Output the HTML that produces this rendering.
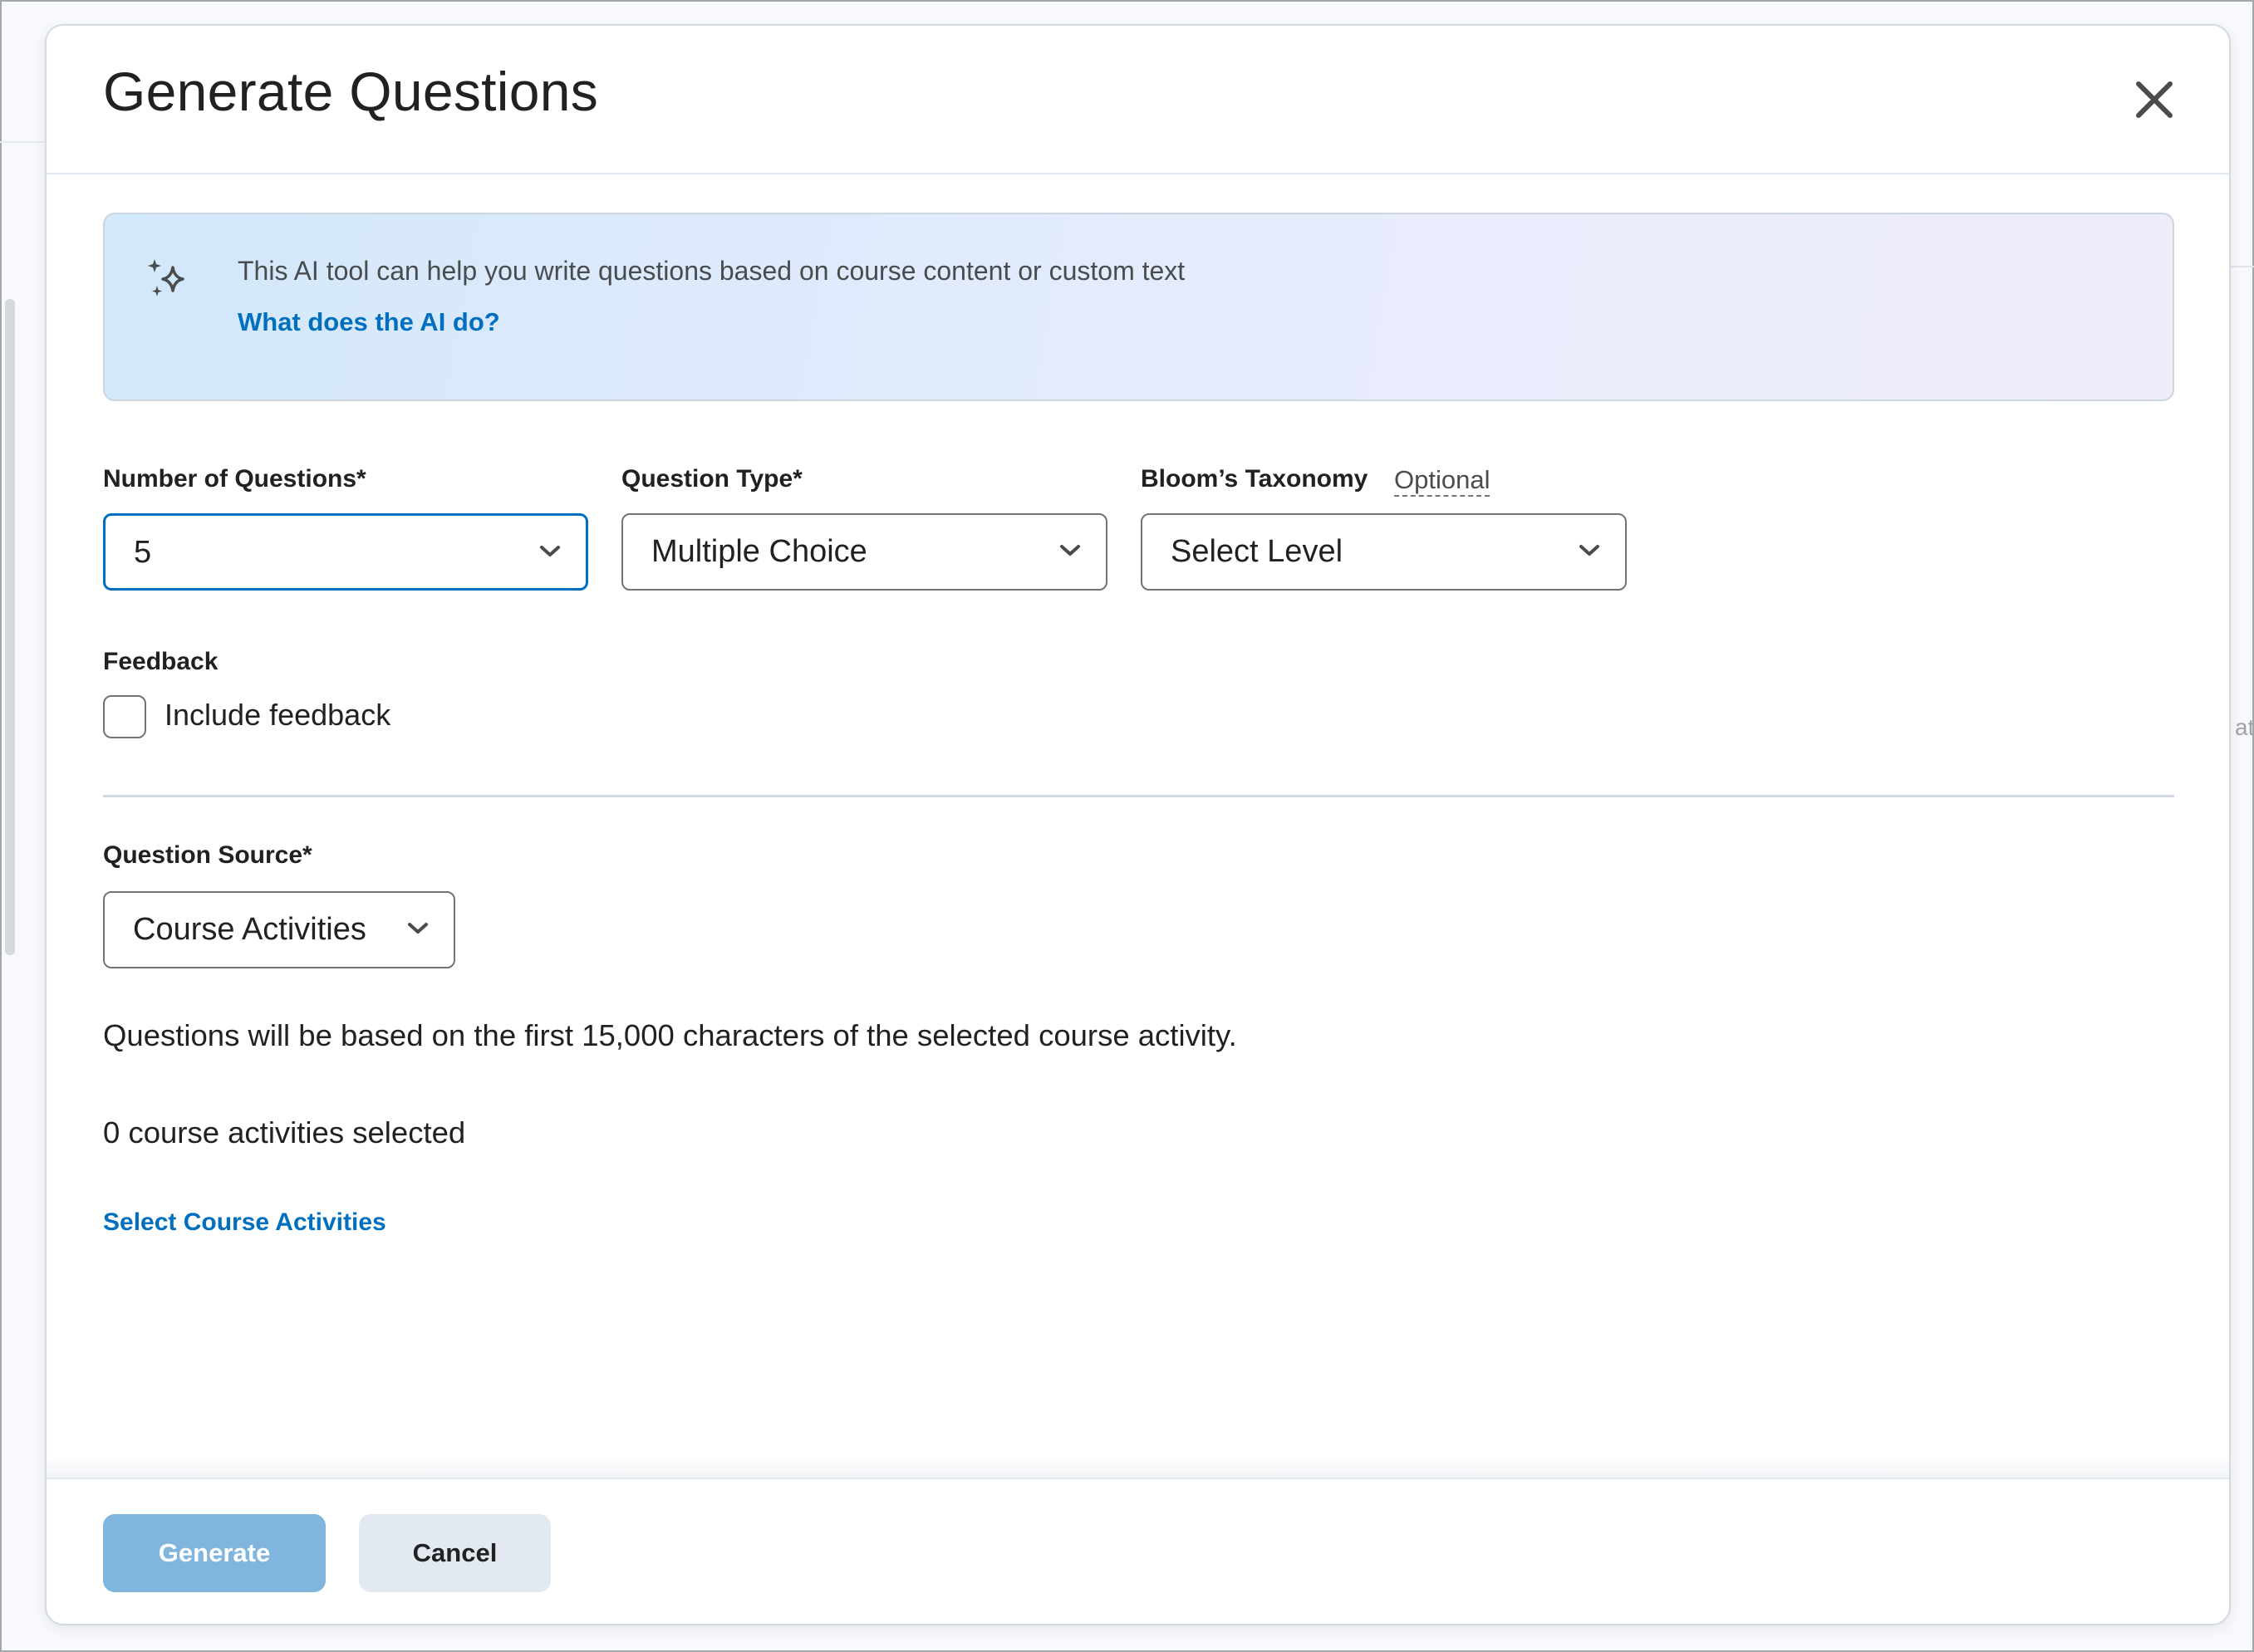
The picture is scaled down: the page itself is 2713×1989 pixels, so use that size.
<!DOCTYPE html>
<html><head><meta charset="utf-8"><style>
*{box-sizing:border-box;margin:0;padding:0}
html,body{width:2713px;height:1989px;overflow:hidden}
body{background:#f8f9fc;font-family:"Liberation Sans",sans-serif;color:#202122;position:relative;box-shadow:inset 0 0 0 2px #a3a6a9}
.abs{position:absolute}
.dlg{left:54px;top:29px;width:2631px;height:1928px;background:#fff;border:2px solid #d3d9e3;border-radius:22px;box-shadow:0 4px 16px rgba(0,0,0,.08)}
.title{left:68px;top:41px;font-size:66px;color:#202122;letter-spacing:0.3px}
.hdiv{left:0;top:177px;width:100%;height:2px;background:#e3e9f1}
.banner{left:68px;top:225px;width:2493px;height:227px;border:2px solid #cdd5df;border-radius:14px;background:linear-gradient(100deg,#d2e8fb 0%,#e6ecfc 55%,#f0edfb 100%)}
.btxt{left:160px;top:50px;font-size:32px;color:#494c4e}
.blink{left:160px;top:112px;font-size:31px;font-weight:bold;color:#006fbf}
.lbl{font-size:30px;font-weight:bold;color:#202122}
.sel{height:93px;border:2px solid #6e7477;border-radius:10px;font-size:38px;color:#202122;padding-left:34px;line-height:89px}
.sel svg{position:absolute;right:30px;top:34px}
.txt{font-size:36.5px;color:#202122}
.link{font-size:30px;font-weight:bold;color:#006fbf}
</style></head><body>
<div class="abs" style="left:0;top:170px;width:54px;height:2px;background:#e6e9ee"></div>
<div class="abs" style="left:6px;top:360px;width:12px;height:790px;background:#d5d8dd;border-radius:6px"></div>
<div class="abs" style="left:2685px;top:320px;width:30px;height:2px;background:#e0e3e8"></div>
<div class="abs" style="left:2690px;top:860px;font-size:28px;color:#a0a3a6">at</div>
<div class="abs dlg">
  <div class="abs title">Generate Questions</div>
  <svg class="abs" style="left:2514px;top:66px" width="46" height="46" viewBox="0 0 46 46"><path d="M4 4L42 42M42 4L4 42" stroke="#494c4e" stroke-width="6" stroke-linecap="round"/></svg>
  <div class="abs hdiv"></div>
  <div class="abs banner">
    <svg class="abs" style="left:52px;top:52px" width="60" height="60" viewBox="0 0 60 60">
      <path d="M8 2 L10 8 L16 10 L10 12 L8 18 L6 12 L0 10 L6 8 Z" fill="#494c4e"/>
      <path d="M30 12 Q32 24 42 26 Q32 28 30 40 Q28 28 18 26 Q28 24 30 12 Z" fill="none" stroke="#494c4e" stroke-width="3.5" stroke-linejoin="round"/>
      <path d="M11 34 L12.5 39 L17 40.5 L12.5 42 L11 47 L9.5 42 L5 40.5 L9.5 39 Z" fill="#494c4e"/>
    </svg>
    <div class="abs btxt">This AI tool can help you write questions based on course content or custom text</div>
    <div class="abs blink">What does the AI do?</div>
  </div>
  <div class="abs lbl" style="left:68px;top:529px">Number of Questions*</div>
  <div class="abs lbl" style="left:692px;top:529px">Question Type*</div>
  <div class="abs lbl" style="left:1317px;top:529px">Bloom’s Taxonomy</div>
  <div class="abs" style="left:1622px;top:529px;font-size:31px;color:#494c4e;border-bottom:2px dashed #6e7477;line-height:36px">Optional</div>
  <div class="abs sel" style="left:68px;top:587px;width:584px;border:3px solid #006fbf">5<svg width="26" height="18" viewBox="0 0 26 18"><path d="M3 4L13 13L23 4" fill="none" stroke="#494c4e" stroke-width="4" stroke-linecap="round" stroke-linejoin="round"/></svg></div>
  <div class="abs sel" style="left:692px;top:587px;width:585px">Multiple Choice<svg width="26" height="18" viewBox="0 0 26 18"><path d="M3 4L13 13L23 4" fill="none" stroke="#494c4e" stroke-width="4" stroke-linecap="round" stroke-linejoin="round"/></svg></div>
  <div class="abs sel" style="left:1317px;top:587px;width:585px">Select Level<svg width="26" height="18" viewBox="0 0 26 18"><path d="M3 4L13 13L23 4" fill="none" stroke="#494c4e" stroke-width="4" stroke-linecap="round" stroke-linejoin="round"/></svg></div>
  <div class="abs lbl" style="left:68px;top:749px">Feedback</div>
  <div class="abs" style="left:68px;top:806px;width:52px;height:52px;border:2px solid #6e7477;border-radius:10px"></div>
  <div class="abs" style="left:142px;top:809px;font-size:36px">Include feedback</div>
  <div class="abs" style="left:68px;top:926px;width:2493px;height:3px;background:#d3d9e3"></div>
  <div class="abs lbl" style="left:68px;top:982px">Question Source*</div>
  <div class="abs sel" style="left:68px;top:1042px;width:424px">Course Activities<svg width="26" height="18" viewBox="0 0 26 18"><path d="M3 4L13 13L23 4" fill="none" stroke="#494c4e" stroke-width="4" stroke-linecap="round" stroke-linejoin="round"/></svg></div>
  <div class="abs txt" style="left:68px;top:1195px">Questions will be based on the first 15,000 characters of the selected course activity.</div>
  <div class="abs txt" style="left:68px;top:1312px">0 course activities selected</div>
  <div class="abs link" style="left:68px;top:1424px">Select Course Activities</div>
  <div class="abs" style="left:0;top:1720px;width:100%;height:28px;background:linear-gradient(#fff,#f3f4f7)"></div>
  <div class="abs" style="left:0;top:1748px;width:100%;height:2px;background:#e3e9f1"></div>
  <div class="abs" style="left:68px;top:1792px;width:268px;height:94px;background:#80b6de;border-radius:14px;color:#fff;font-weight:bold;font-size:31px;text-align:center;line-height:94px">Generate</div>
  <div class="abs" style="left:376px;top:1792px;width:231px;height:94px;background:#e3e9f1;border-radius:14px;color:#202122;font-weight:bold;font-size:31px;text-align:center;line-height:94px">Cancel</div>
</div>
</body></html>
